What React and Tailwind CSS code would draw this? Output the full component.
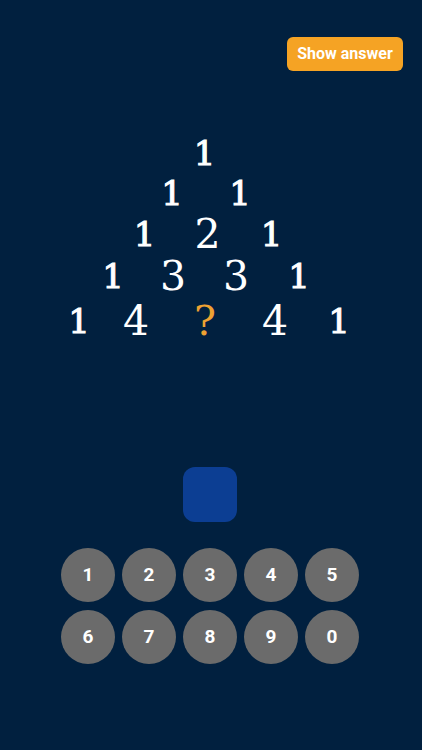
import React from "react";

const serif = { fontFamily: '"DejaVu Serif", "Liberation Serif", serif' };

function One() {
  return (
    <span
      className="w-6 text-center text-[34px] font-normal leading-none text-white [-webkit-text-stroke:1px_white]"
      style={serif}
    >
      1
    </span>
  );
}

function Big({ children, className = "text-white" }) {
  return (
    <span className={`w-6 text-center text-[41px] font-normal leading-none ${className}`} style={serif}>
      {children}
    </span>
  );
}

export default function App() {
  const keys = [["1", "2", "3", "4", "5"], ["6", "7", "8", "9", "0"]];
  return (
    <div
      className="flex h-[750px] w-full flex-col bg-[#01203f]"
      style={{ fontFamily: 'Roboto, "Noto Sans", sans-serif' }}
    >
      <div className="flex justify-end pr-[19px] pt-[37px]">
        <button className="flex h-[34px] w-[116px] items-center justify-center rounded-[6px] bg-[#f5a324] text-[16px] font-bold text-white">
          Show answer
        </button>
      </div>

      <div className="mt-[62px] flex flex-col">
        <div className="flex h-[40px] items-center justify-center pr-[13px]">
          <One />
        </div>
        <div className="flex h-[40px] items-center justify-center gap-[44px] pr-[10px]">
          <One />
          <One />
        </div>
        <div className="flex h-[42px] items-center justify-center pr-[6px]">
          <One />
          <Big className="ml-[38px] text-white">2</Big>
          <span className="ml-[41px] flex"><One /></span>
        </div>
        <div className="flex h-[42px] items-center justify-center pr-[10px]">
          <One />
          <Big className="ml-[35px] text-white">3</Big>
          <Big className="ml-[39px] text-white">3</Big>
          <span className="ml-[40px] flex"><One /></span>
        </div>
        <div className="flex h-[48px] items-center justify-center pr-[4px]">
          <One />
          <Big className="ml-[32px] text-white">4</Big>
          <Big className="ml-[46px] text-[#eea232]">?</Big>
          <Big className="ml-[45px] text-white">4</Big>
          <span className="ml-[41px] flex"><One /></span>
        </div>
      </div>

      <div className="mt-[122px] flex justify-center pr-[2px]">
        <div className="h-[55px] w-[54px] rounded-[12px] bg-[#0c3e93]" />
      </div>

      <div className="mt-[26px] flex flex-col items-center gap-[8px] pr-[2px]">
        {keys.map((row, i) => (
          <div key={i} className="flex gap-[7px]">
            {row.map((k) => (
              <button
                key={k}
                className="flex h-[54px] w-[54px] items-center justify-center rounded-full bg-[#6b6b6b] text-[19px] font-bold text-white"
              >
                {k}
              </button>
            ))}
          </div>
        ))}
      </div>
    </div>
  );
}
